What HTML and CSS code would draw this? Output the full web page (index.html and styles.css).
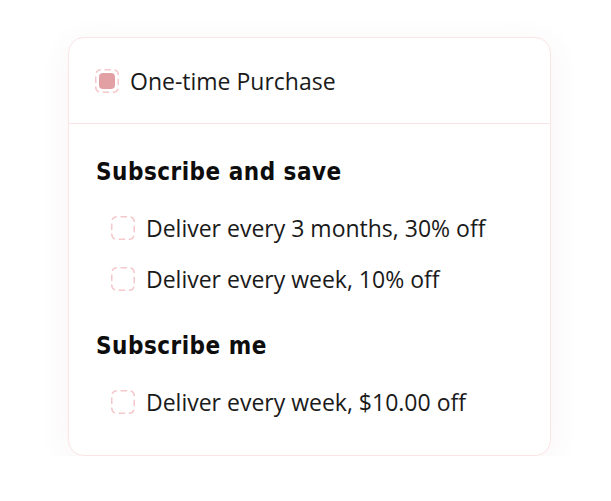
FILE: index.html
```html
<!DOCTYPE html>
<html>
<head>
<meta charset="utf-8">
<link rel="stylesheet" href="styles.css">
</head>
<body>
<div class="card">
  <div class="top">
    <label class="opt">
      <span class="box">
        <svg width="24" height="24" viewBox="0 0 24 24"><rect class="dash" x="0.75" y="0.75" width="22.5" height="22.5" rx="5"/><rect class="fill" x="4" y="4" width="16" height="16" rx="4"/></svg>
      </span>
      <span class="txt">One-time Purchase</span>
    </label>
  </div>
  <div class="bottom">
    <div class="group">
      <h3 class="title">Subscribe and save</h3>
      <div class="list">
        <label class="opt">
          <span class="box"><svg width="24" height="24" viewBox="0 0 24 24"><rect class="dash" x="0.75" y="0.75" width="22.5" height="22.5" rx="5"/></svg></span>
          <span class="txt">Deliver every 3 months, 30% off</span>
        </label>
        <label class="opt">
          <span class="box"><svg width="24" height="24" viewBox="0 0 24 24"><rect class="dash" x="0.75" y="0.75" width="22.5" height="22.5" rx="5"/></svg></span>
          <span class="txt">Deliver every week, 10% off</span>
        </label>
      </div>
    </div>
    <div class="group">
      <h3 class="title">Subscribe me</h3>
      <div class="list">
        <label class="opt">
          <span class="box"><svg width="24" height="24" viewBox="0 0 24 24"><rect class="dash" x="0.75" y="0.75" width="22.5" height="22.5" rx="5"/></svg></span>
          <span class="txt">Deliver every week, $10.00 off</span>
        </label>
      </div>
    </div>
  </div>
</div>
</body>
</html>
```

FILE: styles.css
```css
html, body {
  margin: 0;
  padding: 0;
  background: #ffffff;
}
body {
  padding: 37px 0 0 68px;
  font-family: "Open Sans", "Noto Sans", sans-serif;
  color: #1a1a1a;
}
.card {
  width: 481px;
  height: 417px;
  border: 1px solid #fbe5e6;
  border-radius: 16px;
  background: #fff;
  box-shadow: 0 6px 30px rgba(150, 90, 90, 0.07);
}
.top {
  height: 86px;
  padding: 0 26px;
  display: flex;
  align-items: center;
  border-bottom: 1px solid #fae3e4;
  box-sizing: border-box;
  padding-top: 1px;
}
.opt {
  display: flex;
  align-items: center;
  gap: 11px;
  height: 28px;
}
.box {
  width: 24px;
  height: 24px;
  display: block;
  flex: none;
}
.box svg { display: block; }
.dash {
  fill: none;
  stroke: #f5c8cb;
  stroke-width: 1.5;
  stroke-dasharray: 6.5 3.675;
  stroke-dashoffset: 6.425;
}
.fill { fill: #e3a0a4; }
.txt {
  font-size: 23px;
  line-height: 28px;
  white-space: nowrap;
}
.bottom {
  padding: 34px 27px 0 27px;
  display: flex;
  flex-direction: column;
  gap: 39px;
}
.title {
  margin: 0;
  font-family: "DejaVu Sans", sans-serif;
  font-stretch: condensed;
  font-weight: bold;
  font-size: 24px;
  line-height: 28px;
  color: #0d0d0d;
  letter-spacing: 0.5px;
}
.list {
  margin-top: 28px;
  padding-left: 15px;
  display: flex;
  flex-direction: column;
  gap: 23px;
}
```
